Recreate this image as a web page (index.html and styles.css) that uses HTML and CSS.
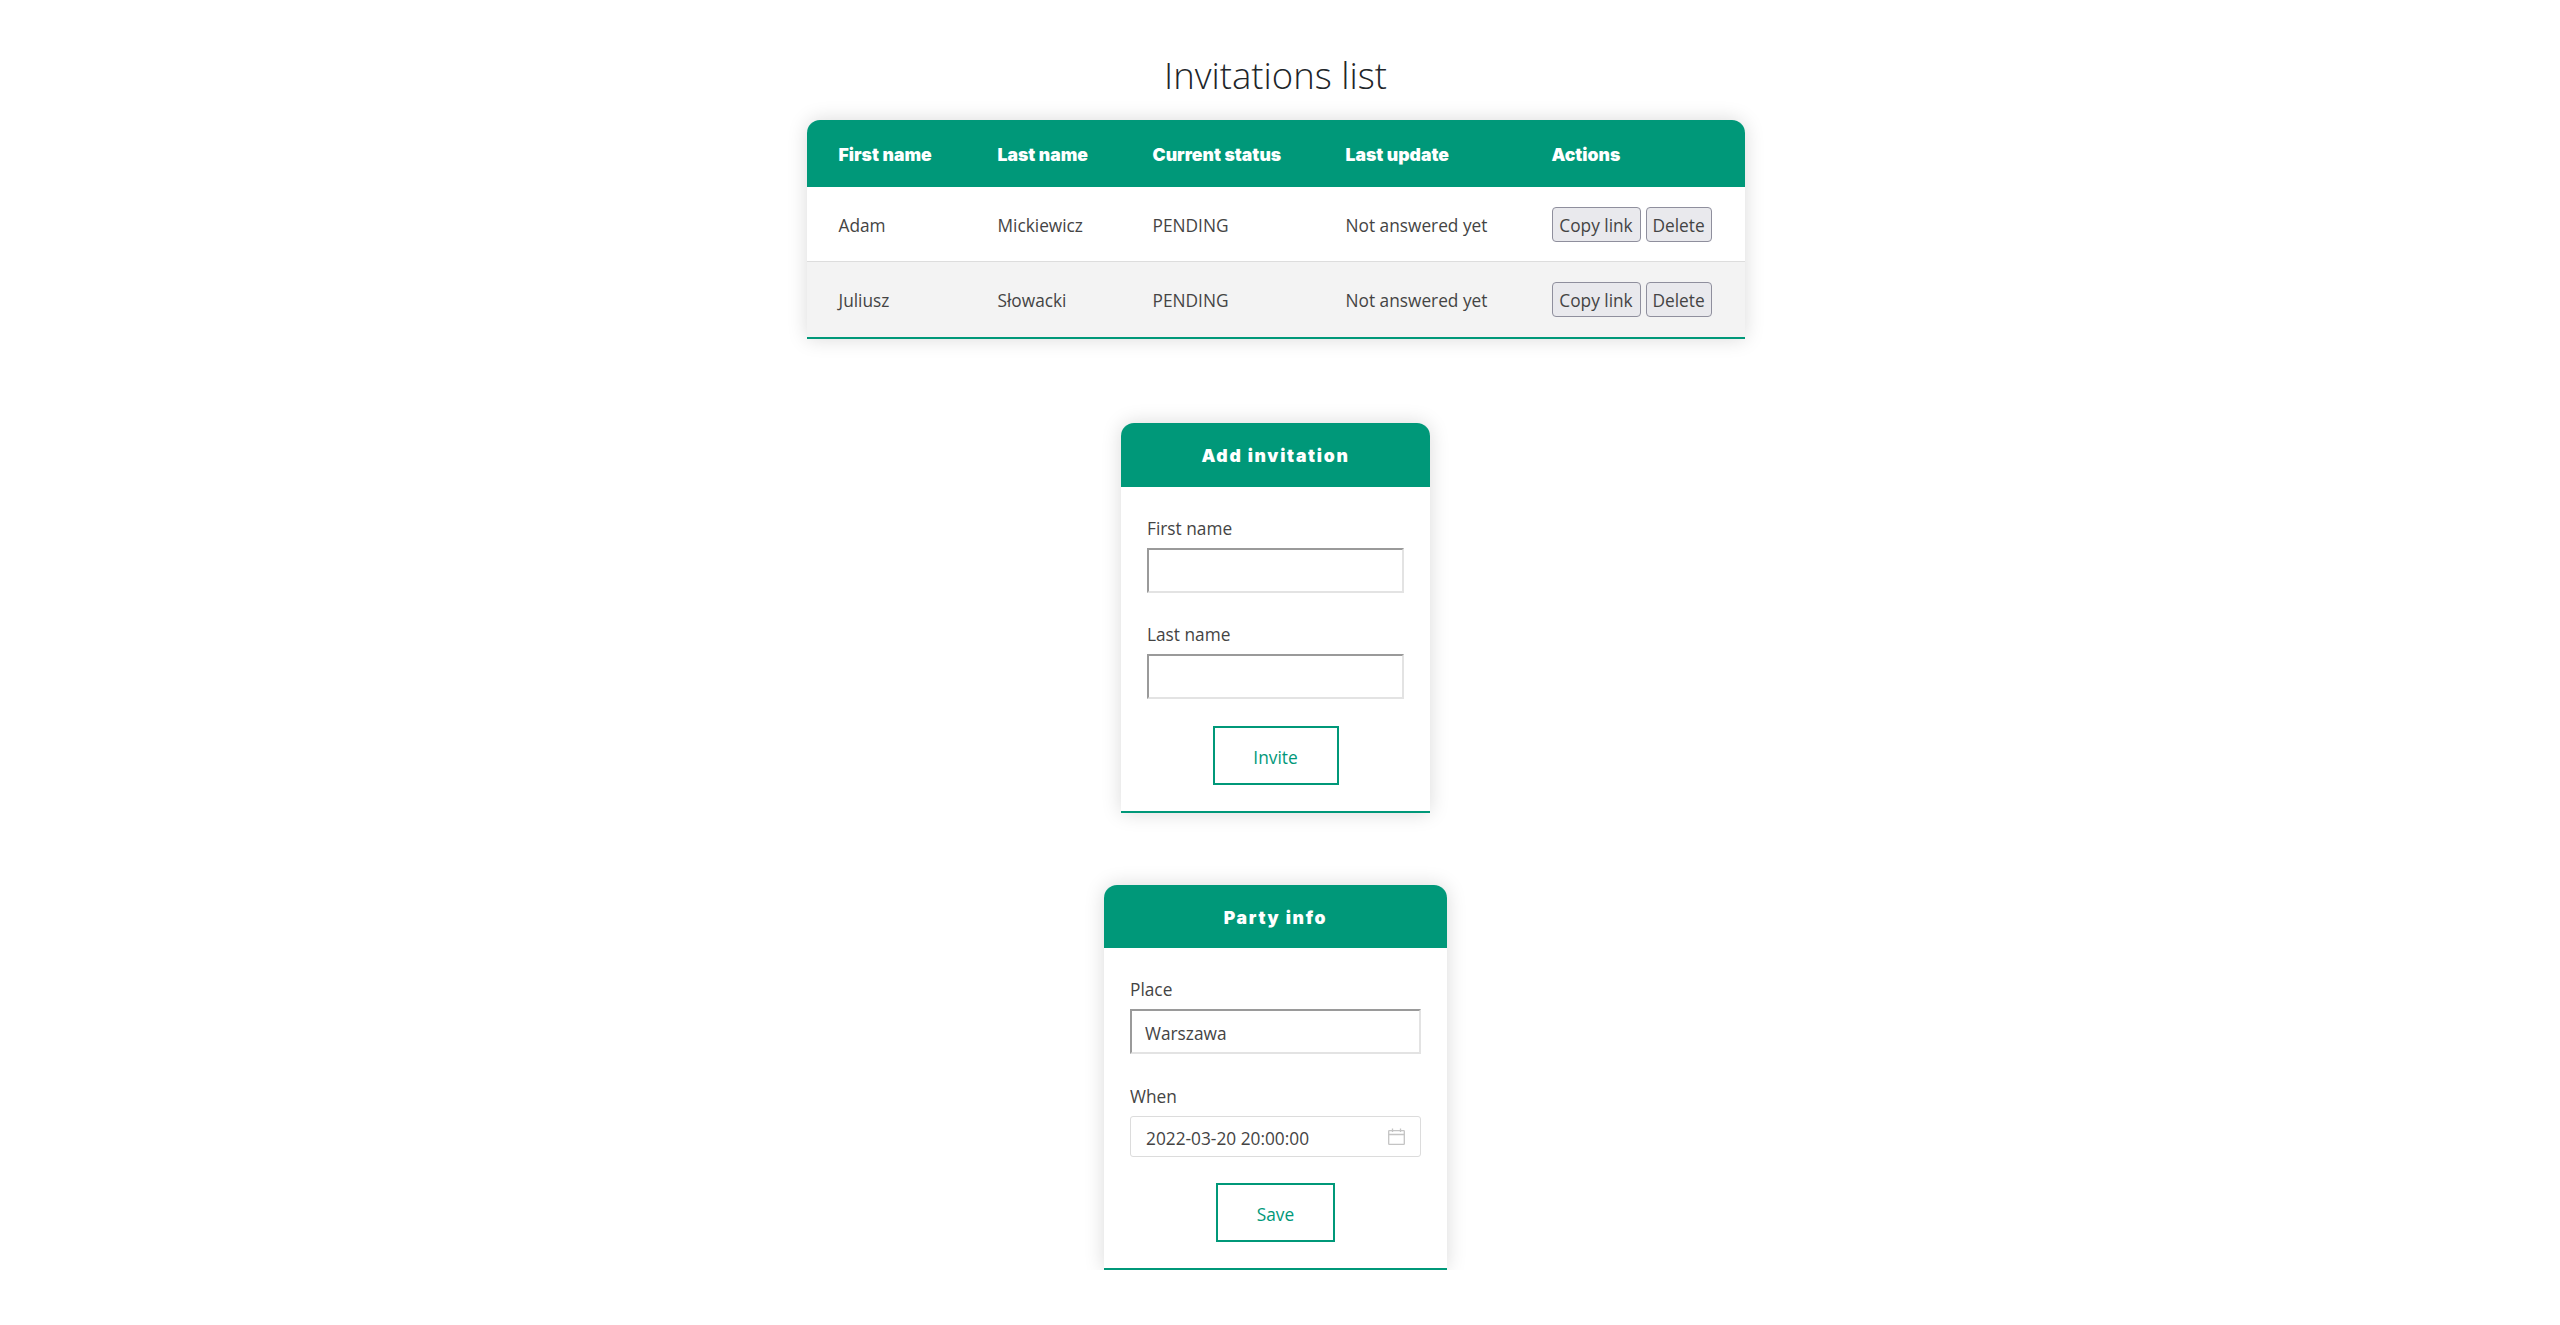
FILE: index.html
```html
<!DOCTYPE html>
<html lang="en">
<head>
<meta charset="utf-8">
<title>Invitations list</title>
<link rel="stylesheet" href="styles.css">
</head>
<body>
<main class="page">
  <h1 class="title">Invitations list</h1>
  <table class="list">
    <colgroup>
      <col class="c1"><col class="c2"><col class="c3"><col class="c4"><col class="c5">
    </colgroup>
    <thead>
      <tr><th>First name</th><th>Last name</th><th>Current status</th><th>Last update</th><th>Actions</th></tr>
    </thead>
    <tbody>
      <tr>
        <td>Adam</td><td>Mickiewicz</td><td>PENDING</td><td>Not answered yet</td>
        <td class="actions"><button class="mini" type="button">Copy link</button><button class="mini" type="button">Delete</button></td>
      </tr>
      <tr>
        <td>Juliusz</td><td>Słowacki</td><td>PENDING</td><td>Not answered yet</td>
        <td class="actions"><button class="mini" type="button">Copy link</button><button class="mini" type="button">Delete</button></td>
      </tr>
    </tbody>
  </table>

  <form class="card card-add">
    <h2 class="card-head">Add invitation</h2>
    <div class="card-body">
      <label class="field"><span class="label">First name</span><input class="input" type="text"></label>
      <label class="field"><span class="label">Last name</span><input class="input" type="text"></label>
      <button class="submit submit-add" type="button">Invite</button>
    </div>
  </form>

  <form class="card card-party">
    <h2 class="card-head">Party info</h2>
    <div class="card-body">
      <label class="field"><span class="label">Place</span><input class="input" type="text" value="Warszawa"></label>
      <label class="field"><span class="label">When</span>
        <span class="date">
          <span class="date-text">2022-03-20 20:00:00</span>
          <svg class="cal" width="17" height="17" viewBox="0 0 17 17" fill="none" stroke="#c4c4c4" stroke-width="1.3">
            <rect x="0.7" y="2.7" width="15.6" height="13.6" rx="0.6"/>
            <path d="M0.7 6.5H16.3M4.5 0.5V4M12.5 0.5V4"/>
          </svg>
        </span>
      </label>
      <button class="submit submit-save" type="button">Save</button>
    </div>
  </form>
</main>
</body>
</html>
```

FILE: styles.css
```css
* { box-sizing: border-box; }
html, body { margin: 0; padding: 0; background: #fff; }
body {
  font-family: "Open Sans", "Noto Sans", sans-serif;
  font-size: 17.3px;
  color: #444;
}
.page {
  display: flex;
  flex-direction: column;
  align-items: center;
  padding: 48px 9px 0 0;
}
.title {
  margin: 0;
  height: 72px;
  font-size: 36.5px;
  line-height: 55px;
  font-weight: 300;
  color: #212529;
}
.list {
  width: 938px;
  table-layout: fixed;
  border-collapse: separate;
  border-spacing: 0;
  box-shadow: 0 0 20px rgba(0, 0, 0, .15);
  border-radius: 13px 13px 0 0;
}
.c1 { width: 159px; }
.c2 { width: 155px; }
.c3 { width: 193px; }
.c4 { width: 206px; }
.c5 { width: 225px; }
.list th {
  height: 67px;
  padding: 2px 0 0 32px;
  background: #009879;
  color: #fff;
  text-align: left;
  font-family: Inter, sans-serif;
  font-size: 17.6px;
  font-weight: 900;
  white-space: nowrap;
}
.list th:first-child { border-top-left-radius: 13px; }
.list th:last-child { border-top-right-radius: 13px; }
.list td {
  height: 75px;
  padding: 2px 0 0 32px;
  border-bottom: 1px solid #ddd;
  white-space: nowrap;
}
.list td.actions { padding-top: 0; }
.list tbody tr:nth-child(even) td {
  height: 77px;
  background: #f3f3f3;
  border-bottom: 2px solid #009879;
}
.actions { font-size: 0; }
.mini {
  height: 35px;
  width: 89px;
  margin: 0 5px 0 0;
  padding: 2px 0 0;
  background: #e9e9ed;
  border: 1px solid #8f8f9d;
  border-radius: 4px;
  color: #444;
  font-family: "Open Sans", sans-serif;
  font-size: 17.3px;
  line-height: 31px;
}
.mini:last-child { margin-right: 0; width: 66px; }
.card {
  box-shadow: 0 0 20px rgba(0, 0, 0, .15);
  border-radius: 13px 13px 0 0;
  background: #fff;
  border-bottom: 2px solid #009879;
}
.card-add { width: 309px; height: 390px; margin-top: 84px; }
.card-party { width: 343px; height: 385px; margin-top: 72px; }
.card-head {
  margin: 0;
  height: 64px;
  background: #009879;
  border-radius: 13px 13px 0 0;
  color: #fff;
  text-align: center;
  font-family: Inter, sans-serif;
  font-size: 17.6px;
  font-weight: 900;
  letter-spacing: 1.7px;
  line-height: 66px;
}
.card-party .card-head { height: 63px; line-height: 65px; }
.card-body {
  display: flex;
  flex-direction: column;
  padding: 26px 26px 0;
}
.field { display: flex; flex-direction: column; }
.label { height: 35px; line-height: 32px; font-size: 17.3px; }
.card-add .field + .field { margin-top: 26px; }
.card-party .field + .field { margin-top: 27px; }
.input {
  display: block;
  width: 100%;
  height: 45px;
  padding: 3px 13px 0;
  border-style: solid;
  border-width: 2px;
  border-color: #9a9a9a #e3e3e3 #e3e3e3 #9a9a9a;
  border-radius: 0;
  background: #fff;
  color: #444;
  font-family: "Open Sans", sans-serif;
  font-size: 17.3px;
  outline: none;
}
.date {
  display: flex;
  align-items: center;
  justify-content: space-between;
  height: 41px;
  padding: 0 15px;
  border: 1px solid #dcdcdc;
  border-radius: 3px;
  font-size: 17.3px;
}
.date-text { padding-top: 3px; }
.submit {
  align-self: center;
  height: 59px;
  padding: 3px 0 0;
  background: #fff;
  border: 2px solid #009879;
  color: #009879;
  font-family: "Open Sans", sans-serif;
  font-size: 17.3px;
}
.submit-add { width: 126px; margin-top: 27px; }
.submit-save { width: 119px; margin-top: 26px; }
```
